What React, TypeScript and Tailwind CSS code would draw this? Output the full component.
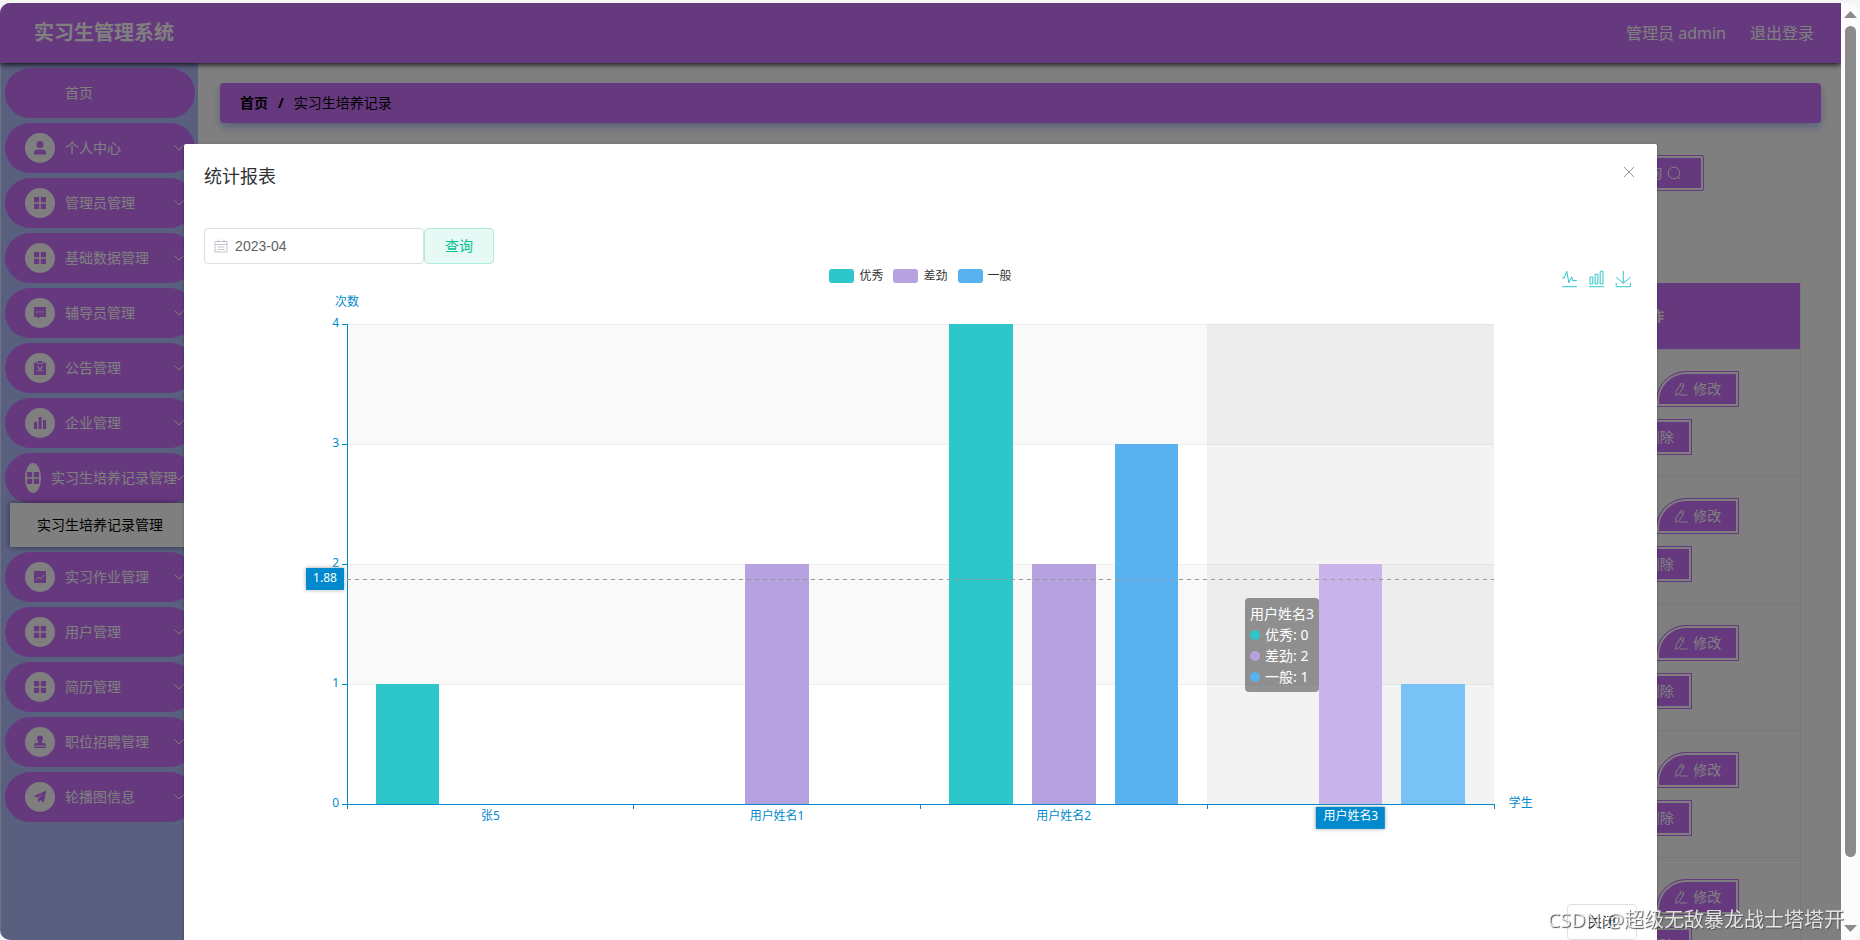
import type { ReactNode } from "react";

const icons: Record<string, ReactNode> = {
  grid: <path d="M0 0h5.2v5.2H0zM6.8 0H12v5.2H6.8zM0 6.8h5.2V12H0zM6.8 6.8H12V12H6.8z" />,
  user: (
    <>
      <circle cx="6" cy="2.4" r="3.5" />
      <path d="M0 12.6V11a3.6 3.6 0 0 1 3.6-3.6h4.8A3.6 3.6 0 0 1 12 11v1.6z" />
    </>
  ),
  comment: (
    <path
      fillRule="evenodd"
      d="M0 0h12v10H6.4L3.6 12V10H0zM2.2 4.2v1.4h1.4V4.2zM5.3 4.2v1.4h1.4V4.2zM8.4 4.2v1.4h1.4V4.2z"
    />
  ),
  release: (
    <>
      <path d="M3.8-1h4.4v2H3.8z" />
      <path
        fillRule="evenodd"
        d="M0 .4h3v1.4h6V.4h3V13H0zM3.3 4.9 5.2 7 3.3 9.1l.8.8L6 7.8l1.9 2.1.8-.8L6.8 7l1.9-2.1-.8-.8L6 6.2 4.1 4.1z"
      />
    </>
  ),
  data: <path d="M0 5h3.2v7H0zM4.6 0h3v12h-3zM9 3h3v9H9z" />,
  marketing: (
    <>
      <path d="M0 0h12v12H0z" />
      <path d="m2 8.6 2.4-2.4 2 1.6L10 4" fill="none" stroke="#fff" strokeWidth="1" />
    </>
  ),
  stamp: (
    <path d="M6-.6a3 3 0 0 1 3 3c0 1.6-1 2.2-1 4V7h2.4A1.6 1.6 0 0 1 12 8.6v1H0v-1A1.6 1.6 0 0 1 1.6 7H4v-.6c0-1.8-1-2.4-1-4a3 3 0 0 1 3-3zM0 10.6h12V12H0z" />
  ),
  plane: <path d="M12.4-.4 0 5l3.4 1.8L10 2 4.2 7.4V12l2.2-3 3.4 2.4z" />,
};

const menu = [
  { label: "首页" },
  { label: "个人中心", icon: "user" },
  { label: "管理员管理", icon: "grid" },
  { label: "基础数据管理", icon: "grid" },
  { label: "辅导员管理", icon: "comment" },
  { label: "公告管理", icon: "release" },
  { label: "企业管理", icon: "data" },
  { label: "实习生培养记录管理", icon: "grid", child: "实习生培养记录管理" },
  { label: "实习作业管理", icon: "marketing" },
  { label: "用户管理", icon: "grid" },
  { label: "简历管理", icon: "grid" },
  { label: "职位招聘管理", icon: "stamp" },
  { label: "轮播图信息", icon: "plane" },
];

const series = [
  { name: "优秀", color: "#2ec7c9", active: "#4cdadc", values: [1, 0, 4, 0] },
  { name: "差劲", color: "#b6a2de", active: "#c8b4ea", values: [0, 2, 2, 2] },
  { name: "一般", color: "#5ab1ef", active: "#78c2f5", values: [0, 0, 3, 1] },
];
const categories = ["张5", "用户姓名1", "用户姓名2", "用户姓名3"];
const activeIndex = 3;

const toolbox = [
  { label: "切换为折线图", box: "4 6 52 53", d: "M4.1,28.9h7.1l9.3-22l7.4,38l9.7-19.7l3,12.8h14.9M4.1,58h51.4" },
  { label: "切换为柱状图", box: "3 1 54 58", d: "M6.7,22.9h10V48h-10V22.9zM24.9,13h10v35h-10V13zM43.2,2h10v46h-10V2zM3.1,58h53.7" },
  { label: "保存为图片", box: "4 0 52 59", d: "M4.7,22.9L29.3,45.5L54.7,23.4M4.6,43.6L4.6,58L53.8,58L53.8,43.6M29.2,45.1L29.2,0" },
];

function Sidebar() {
  return (
    <nav className="w-[198px] shrink-0 border-l border-[#dee4ff] bg-[#b3bfff] pt-[5px] pl-1 text-sm leading-[50px] text-white">
      {menu.map((item) => (
        <div key={item.label} className="mb-[5px]">
          <a
            href="#"
            className="relative flex h-[50px] w-[190px] items-center gap-[10px] rounded-full bg-[#cc72ff] pr-[18px] pl-5 whitespace-nowrap"
          >
            <span
              className={
                item.icon
                  ? "flex h-[30px] w-[30px] min-w-0 items-center justify-center rounded-[50%] bg-white"
                  : "h-[30px] w-[30px]"
              }
            >
              {item.icon && (
                <svg viewBox="0 0 12 12" className="h-3 w-3 shrink-0 overflow-visible fill-[#cc72ff]">
                  {icons[item.icon]}
                </svg>
              )}
            </span>
            <span className="shrink-0">{item.label}</span>
            {item.icon && (
              <svg
                viewBox="0 0 12 12"
                className="absolute top-[19px] right-[10px] h-3 w-3 fill-none stroke-white"
              >
                <path d="M1.5 3.5 6 8l4.5-4.5" />
              </svg>
            )}
          </a>
          {item.child && (
            <a
              href="#"
              className="relative ml-[5px] block h-11 w-[185px] bg-white pl-[27px] leading-11 whitespace-nowrap text-black shadow-[0_0_6px_rgba(0,0,0,0.5)]"
            >
              {item.child}
            </a>
          )}
        </div>
      ))}
    </nav>
  );
}

const actionButton =
  "inline-flex h-9 w-[83px] items-center justify-center gap-[5px] border border-[#cc72ff] bg-[#cc72ff] text-sm text-white shadow-[inset_0_0_0_2px_#fff]";

function RecordTable() {
  return (
    <table className="mt-[92px] w-full table-fixed border-collapse border-r border-[#ebeef5] text-sm">
      <thead>
        <tr className="h-[66px] bg-[#cc72ff] text-white">
          <th />
          <th className="w-[300px] font-bold">操作</th>
        </tr>
      </thead>
      <tbody>
        {[1, 2, 3, 4, 5].map((row) => (
          <tr key={row} className="h-[127px] border-y border-[#ebeef5]">
            <td />
            <td>
              <div className="flex flex-wrap justify-center gap-3 px-10">
                <button className={`${actionButton} rounded-tl-[30px]`}>详情</button>
                <button className={`${actionButton} rounded-tl-[30px]`}>
                  <svg viewBox="0 0 14 14" className="h-[14px] w-[14px] fill-none stroke-white">
                    <path d="M7.2 1.1 9.9 2.6 9.4 5 5.4 11.4l-3.6 2 .2-4zM6 3.2l2.8 1.6M5.5 13h8" />
                  </svg>
                  修改
                </button>
                <button className={actionButton}>
                  <svg viewBox="0 0 14 14" className="h-[14px] w-[14px] fill-none stroke-white">
                    <path d="M1 3.5h12M5 3.5V1.5h4v2M2.5 3.5V13h9V3.5M5.5 6v4.5M8.5 6v4.5" />
                  </svg>
                  删除
                </button>
              </div>
            </td>
          </tr>
        ))}
      </tbody>
    </table>
  );
}

function BarChart() {
  const left = 143;
  const right = 1290;
  const bottom = 540;
  const unit = 120;
  const band = (right - left) / categories.length;
  const barWidth = (band * 0.8) / 3.6;

  return (
    <div className="relative">
      <div className="flex h-[30px] items-start justify-center gap-[10px] pt-[5px] text-xs leading-[14px] text-[#333]">
        {series.map((s) => (
          <span key={s.name} className="flex gap-[5px]">
            <i className="h-[14px] w-[25px] rounded-[3px]" style={{ background: s.color }} />
            {s.name}
          </span>
        ))}
      </div>
      <div className="absolute top-[7px] right-[6px] flex gap-3">
        {toolbox.map((tool) => (
          <button key={tool.label} aria-label={tool.label} className="h-4 w-[15px]">
            <svg
              viewBox={tool.box}
              preserveAspectRatio="none"
              className="h-4 w-[15px] overflow-visible fill-none stroke-[#2ec7c9]"
            >
              <path d={tool.d} vectorEffect="non-scaling-stroke" />
            </svg>
          </button>
        ))}
      </div>

      <svg viewBox="0 30 1433 570" className="block w-full overflow-visible text-xs">
        {/* split areas, hovered band and split lines */}
        <g shapeRendering="crispEdges">
          <rect x={left} y="60" width={right - left} height={unit} fill="#f9f9f9" />
          <rect x={left} y="300" width={right - left} height={unit} fill="#f9f9f9" />
          {[1, 2, 3, 4].map((n) => (
            <rect key={n} x={left} y={bottom - n * unit} width={right - left} height="1" fill="#eee" />
          ))}
          <rect
            x={left + activeIndex * band}
            y="60"
            width={band}
            height="480"
            fill="#969696"
            fillOpacity="0.11"
          />
          {series.map((s, si) =>
            s.values.map((v, i) => (
              <rect
                key={s.name + i}
                x={left + i * band + band * 0.1 + si * barWidth * 1.3}
                y={bottom - v * unit}
                width={barWidth}
                height={v * unit}
                fill={i === activeIndex ? s.active : s.color}
              />
            ))
          )}
          <g fill="#008acd">
            <rect x={left} y="60" width="1" height="485" />
            <rect x={left} y={bottom} width={right - left} height="1" />
            {[0, 1, 2, 3, 4].map((n) => (
              <rect key={n} x={left - 5} y={bottom - n * unit} width="5" height="1" />
            ))}
            {[1, 2, 3, 4].map((n) => (
              <rect key={n} x={Math.floor(left + n * band)} y={bottom} width="1" height="5" />
            ))}
          </g>
          <path d="M143 315.500H1290" stroke="#999" strokeDasharray="4 4" />
        </g>

        <g fill="#008acd">
          <text x="143" y="42" textAnchor="middle">次数</text>
          <text x="1305" y="543">学生</text>
          {[0, 1, 2, 3, 4].map((n) => (
            <text key={n} x="135" y={bottom - n * unit + 3} textAnchor="end">
              {n}
            </text>
          ))}
          {categories.slice(0, activeIndex).map((name, i) => (
            <text key={name} x={left + (i + 0.5) * band} y="556" textAnchor="middle">
              {name}
            </text>
          ))}
        </g>

        {/* axis pointer labels */}
        <g className="drop-shadow-[0_0_2px_#aaa]" fill="#008acd">
          <rect x="102" y="304" width="38" height="22" />
          <rect x="1112" y="543" width="69" height="22" />
        </g>
        <g fill="#fff" textAnchor="middle">
          <text x="121" y="318">1.88</text>
          <text x="1147" y="556">{categories[activeIndex]}</text>
        </g>
      </svg>

      <div className="absolute top-[334px] left-[1041px] rounded bg-[#323232]/50 p-[5px] text-sm leading-[21px] whitespace-nowrap text-white">
        <p>{categories[activeIndex]}</p>
        {series.map((s) => (
          <p key={s.name} className="flex items-center gap-[5px]">
            <i className="h-[10px] w-[10px] rounded-full" style={{ background: s.color }} />
            {s.name}: {s.values[activeIndex]}
          </p>
        ))}
      </div>
    </div>
  );
}

function ReportDialog() {
  return (
    <div
      role="dialog"
      aria-label="统计报表"
      className="mx-auto mt-[15vh] w-4/5 rounded-xs bg-white shadow-[0_1px_3px_rgba(0,0,0,0.3)]"
    >
      <div className="flex justify-between px-5 pt-5 pb-[10px]">
        <h2 className="text-lg leading-6 text-[#303133]">统计报表</h2>
        <button aria-label="关闭" className="flex h-4 w-4 justify-center">
          <svg viewBox="0 0 16 16" className="h-4 w-4 fill-none stroke-[#909399]">
            <path d="m3 3 10 10M13 3 3 13" />
          </svg>
        </button>
      </div>
      <div className="px-5 py-[30px]">
        <div className="flex">
          <label className="relative">
            <svg
              viewBox="0 0 14 14"
              className="absolute top-[11px] left-[10px] h-[14px] w-[14px] fill-none stroke-[#c0c4cc]"
            >
              <path d="M1 2.5h12V13H1zM1 5.5h12M4 .5v3M10 .5v3M3.500 8h7M3.500 10.5h7" />
            </svg>
            <input
              type="text"
              aria-label="月份"
              defaultValue="2023-04"
              className="h-9 w-[220px] rounded border border-[#dcdfe6] pl-[30px] font-['Liberation_Sans',Arial,sans-serif] text-sm text-[#606266]"
            />
          </label>
          <button className="h-9 w-[70px] rounded border border-[#b0ecdc] bg-[#e6f9f4] text-sm text-[#00c292]">
            查询
          </button>
        </div>
        <BarChart />
      </div>
      <div className="flex justify-end px-5 pt-[10px] pb-5">
        <button className="h-9 w-[70px] rounded border border-[#dcdfe6] text-sm text-[#303133]">
          关闭
        </button>
      </div>
    </div>
  );
}

function ScrollBar() {
  return (
    <div className="flex w-[19px] shrink-0 flex-col items-center rounded-r-[10px] bg-[#fcfcfc] py-2">
      <svg viewBox="0 0 13 7" className="h-[7px] w-[13px] fill-[#8b8b8b]">
        <path d="M6.5 0 13 7H0z" />
      </svg>
      <div className="mt-2 h-[831px] w-[11px] rounded-full bg-[#8b8b8b]" />
      <svg viewBox="0 0 13 7" className="mt-auto h-[7px] w-[13px] fill-[#8b8b8b]">
        <path d="M0 0h13L6.5 7z" />
      </svg>
    </div>
  );
}

export default function App() {
  return (
    <div className="flex h-screen overflow-hidden bg-[#f5f5f5] pt-[3px] font-['Noto_Sans','Noto_Sans_CJK_SC',sans-serif]">
      <div className="relative flex flex-1 flex-col overflow-hidden rounded-l-[10px] bg-white">
        <header className="relative flex h-[60px] shrink-0 items-center justify-between bg-[#cc72ff] pr-[27px] pl-[34px] text-white shadow-[0_1px_6px_#000]">
          <h1 className="text-xl font-bold">实习生管理系统</h1>
          <div className="flex gap-6">
            <span>管理员 admin</span>
            <button>退出登录</button>
          </div>
        </header>

        <div className="flex min-h-0 flex-1">
          <Sidebar />
          <main className="min-w-0 flex-1 pt-5 pr-5 pl-[22px]">
            <div className="flex h-10 items-center gap-[10px] rounded bg-[#cc72ff] pl-5 text-sm text-black shadow-[0_4px_8px_#b3bfff]">
              <a href="#" className="font-bold">首页</a>
              <b>/</b>
              <span>实习生培养记录</span>
            </div>
            <div className="mt-8 flex justify-end pr-[117px]">
              <button className="flex h-9 items-center gap-[5px] rounded-xs border border-[#cc72ff] bg-[#cc72ff] px-[22px] text-sm text-white shadow-[inset_0_0_0_2px_#fff]">
                查询
                <svg viewBox="0 0 14 14" className="h-[14px] w-[14px] fill-none stroke-white">
                  <circle cx="7" cy="7" r="5.8" />
                  <path d="m11 11 2.200 2.200" />
                </svg>
              </button>
            </div>
            <div className="pr-5">
              <RecordTable />
            </div>
          </main>
        </div>

        <div className="absolute inset-0 overflow-hidden bg-black/50">
          <ReportDialog />
        </div>
      </div>
      <ScrollBar />
      <p className="fixed right-4 bottom-[5px] text-xl leading-[30px] text-white/80 [text-shadow:1px_1px_1px_#555]">
        CSDN @超级无敌暴龙战士塔塔开
      </p>
    </div>
  );
}
